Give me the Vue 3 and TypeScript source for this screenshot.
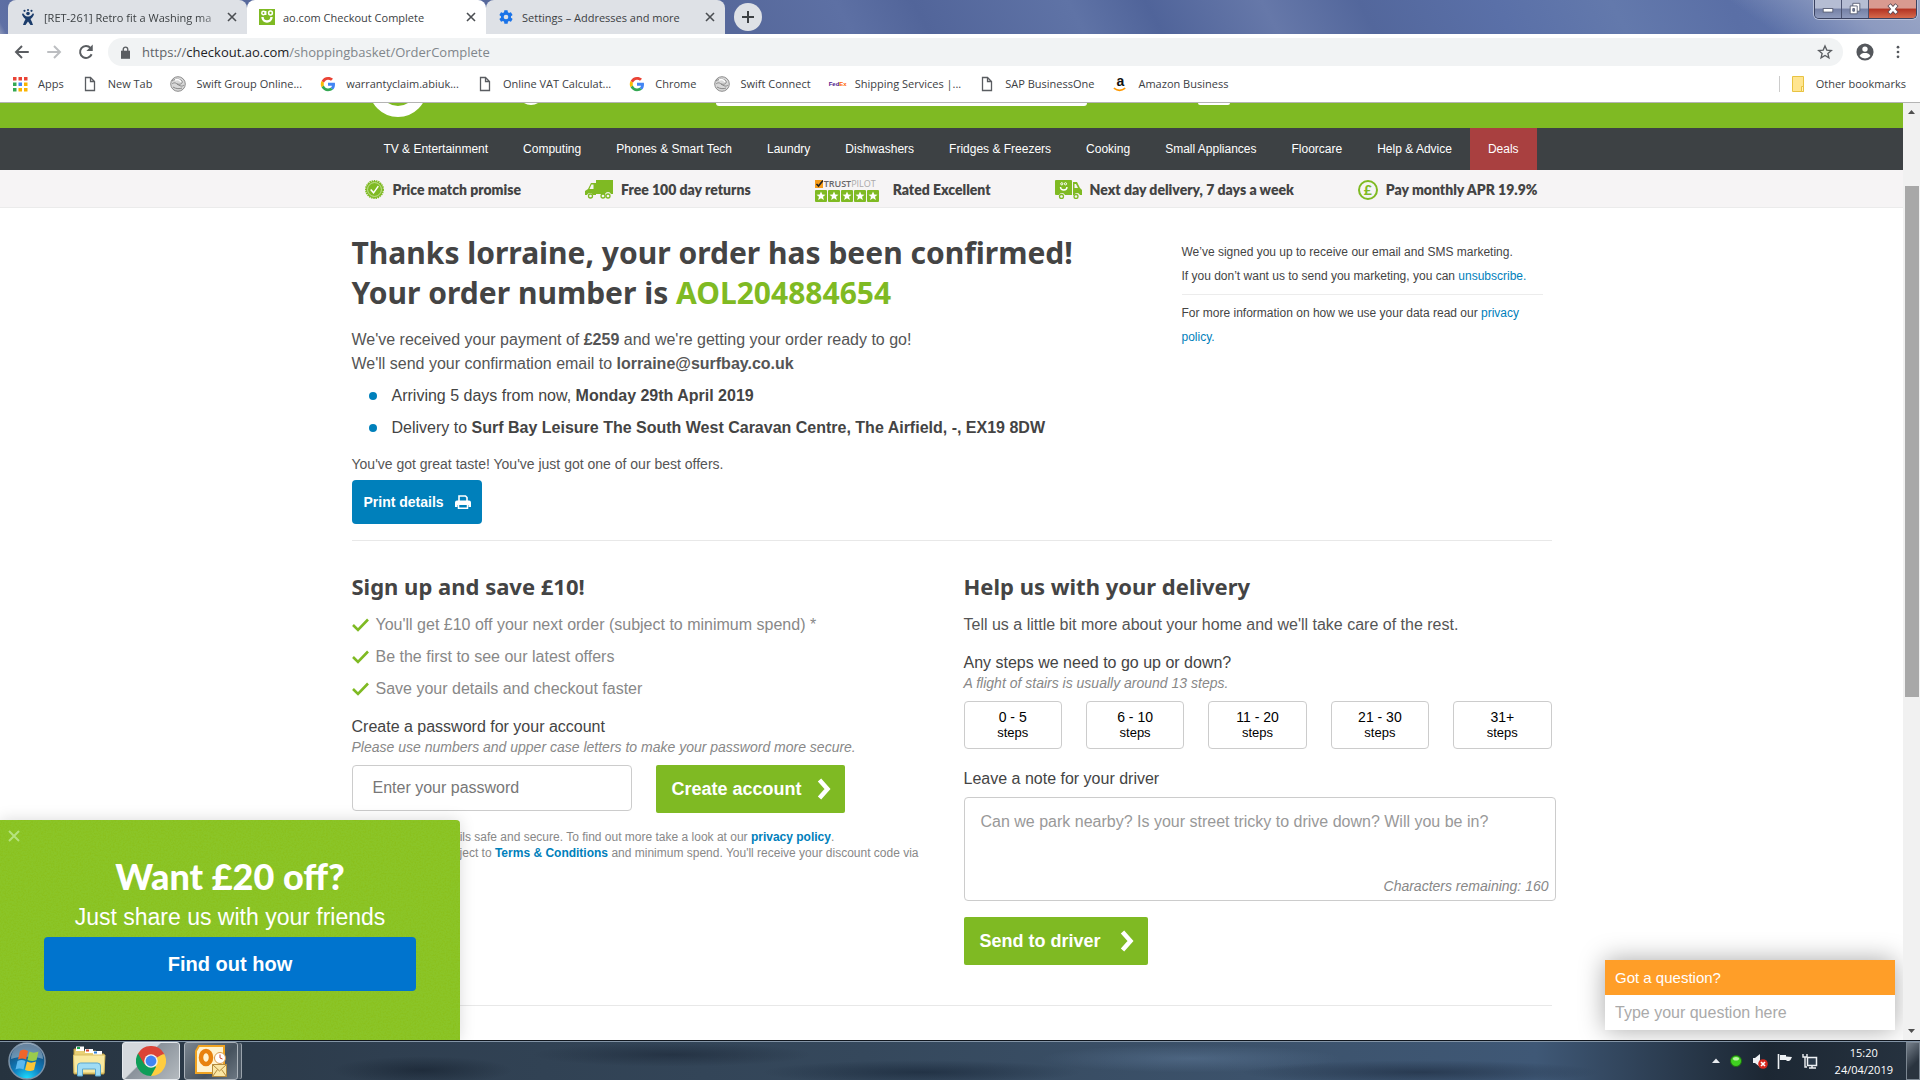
<script setup lang="ts">
import { ref } from 'vue'

interface Tab { title: string; icon: string; active: boolean }
interface Bookmark { title: string; icon: string }

const tabs: Tab[] = [
  { title: '[RET-261] Retro fit a Washing ma', icon: 'jira', active: false },
  { title: 'ao.com Checkout Complete', icon: 'ao', active: true },
  { title: 'Settings – Addresses and more', icon: 'gear', active: false },
]

const bookmarks: Bookmark[] = [
  { title: 'Apps', icon: 'apps' },
  { title: 'New Tab', icon: 'doc' },
  { title: 'Swift Group Online...', icon: 'swift' },
  { title: 'warrantyclaim.abiuk...', icon: 'google' },
  { title: 'Online VAT Calculat...', icon: 'doc' },
  { title: 'Chrome', icon: 'google' },
  { title: 'Swift Connect', icon: 'swift' },
  { title: 'Shipping Services |...', icon: 'fedex' },
  { title: 'SAP BusinessOne', icon: 'doc' },
  { title: 'Amazon Business', icon: 'amazon' },
]

const categories: string[] = [
  'TV & Entertainment', 'Computing', 'Phones & Smart Tech', 'Laundry', 'Dishwashers',
  'Fridges & Freezers', 'Cooking', 'Small Appliances', 'Floorcare', 'Help & Advice', 'Deals',
]

const promos = [
  { icon: 'check', text: 'Price match promise' },
  { icon: 'truck', text: 'Free 100 day returns' },
  { icon: 'trustpilot', text: 'Rated Excellent' },
  { icon: 'van', text: 'Next day delivery, 7 days a week' },
  { icon: 'pound', text: 'Pay monthly APR 19.9%' },
]

const benefits: string[] = [
  "You'll get £10 off your next order (subject to minimum spend) *",
  'Be the first to see our latest offers',
  'Save your details and checkout faster',
]

const stepRanges: string[] = ['0 - 5', '6 - 10', '11 - 20', '21 - 30', '31+']

const address = ref('https://checkout.ao.com/shoppingbasket/OrderComplete')
const password = ref('')
const note = ref('')
const question = ref('')
</script>

<template>
  <div class="desktop">
    <header class="chrome">
      <div class="tabstrip">
        <div v-for="tab in tabs" :key="tab.title" class="tab" :class="{ active: tab.active }">
          <svg v-if="tab.icon === 'jira'" class="ico" viewBox="0 0 16 16" fill="#1b3c6b">
            <circle cx="8" cy="4.500" r="1.800" /><circle cx="4.500" cy="1.800" r="1.100" /><circle cx="8" cy="1" r="1" /><circle cx="11.500" cy="1.800" r="1.100" />
            <path d="M3 4c1.500 3 4 3.500 5 3.500s3.500-.5 5-3.500l1 1.500c-1 2.500-2 3.500-3.500 4.500 1 2 2 4 2.500 6h-2.500L8 12.500 5.500 16H3c.5-2 1.500-4 2.500-6C4 9 3 8 2 5.500z" />
          </svg>
          <svg v-else-if="tab.icon === 'ao'" class="ico" viewBox="0 0 16 16">
            <rect width="16" height="16" fill="#7fba23" />
            <g fill="none" stroke="#fff" stroke-width="1.500"><circle cx="4.500" cy="4" r="1.700" /><path d="M6.700 2v4" /><circle cx="11.500" cy="4" r="1.900" /></g>
            <path d="M3.500 8c0 6 9 6 9 0" fill="none" stroke="#fff" stroke-width="2.400" />
          </svg>
          <svg v-else class="ico" viewBox="0 0 24 24" fill="#1a73e8">
            <path d="M19.400 13c0-.300.100-.700.100-1s0-.700-.100-1l2.100-1.700c.200-.100.300-.400.100-.600l-2-3.500c-.100-.200-.400-.300-.600-.200l-2.500 1c-.500-.400-1.100-.700-1.700-1l-.400-2.600c0-.200-.200-.400-.500-.400h-4c-.200 0-.500.200-.500.400L9.100 5c-.600.300-1.200.600-1.700 1l-2.500-1c-.200-.100-.500 0-.600.200l-2 3.500c-.100.200-.1.500.1.600L4.500 11c0 .300-.1.700-.1 1s0 .700.1 1l-2.100 1.700c-.2.100-.3.400-.1.600l2 3.500c.1.200.4.300.6.200l2.500-1c.5.400 1.100.7 1.700 1l.4 2.600c0 .2.200.4.5.4h4c.2 0 .5-.2.5-.4l.4-2.600c.6-.3 1.200-.6 1.700-1l2.500 1c.2.100.5 0 .6-.2l2-3.500c.1-.2.100-.500-.100-.600zM12 15.500a3.500 3.500 0 1 1 0-7 3.500 3.500 0 0 1 0 7z" />
          </svg>
          <span class="tab-title">{{ tab.title }}</span>
          <button class="tab-close" aria-label="Close tab">
            <svg viewBox="0 0 10 10"><path d="M1 1l8 8M9 1l-8 8" stroke="#4b4e52" stroke-width="1.600" /></svg>
          </button>
        </div>
        <button class="new-tab" aria-label="New tab">
          <svg viewBox="0 0 14 14"><path d="M7 1v12M1 7h12" stroke="#3c4043" stroke-width="2" /></svg>
        </button>
        <div class="win-controls">
          <button aria-label="Minimise"><svg viewBox="0 0 16 16"><rect x="2.500" y="7.500" width="11" height="4" fill="#fff" stroke="#555b70" /></svg></button>
          <button aria-label="Restore"><svg viewBox="0 0 16 16"><path d="M5.500 1.500h8v9h-8z" fill="#fff" stroke="#555b70" /><path d="M2.500 4.500h8v9h-8z" fill="#fff" stroke="#555b70" /><path d="M5.500 7.500h2v3h-2z" fill="#7480a8" stroke="#555b70" /></svg></button>
          <button class="win-close" aria-label="Close"><svg viewBox="0 0 16 16"><path d="M3.500 3l9 10M12.500 3l-9 10" stroke="#5a4a55" stroke-width="5" /><path d="M4 3.500l8 9M12 3.500l-8 9" stroke="#fff" stroke-width="3" /></svg></button>
        </div>
      </div>

      <div class="toolbar">
        <button class="tool" aria-label="Back"><svg viewBox="0 0 24 24"><path d="M21 12H4M12 4l-8 8 8 8" fill="none" stroke="#5a5d61" stroke-width="2.600" /></svg></button>
        <button class="tool" aria-label="Forward"><svg viewBox="0 0 24 24"><path d="M3 12h17M12 4l8 8-8 8" fill="none" stroke="#bcbec1" stroke-width="2.600" /></svg></button>
        <button class="tool" aria-label="Reload"><svg viewBox="0 0 24 24"><path d="M19.500 15a8 8 0 1 1-1.500-8.500" fill="none" stroke="#5a5d61" stroke-width="2.600" /><path d="M21 2v8.500h-8.500z" fill="#5a5d61" /></svg></button>
        <div class="omnibox">
          <svg class="lock" viewBox="0 0 10 14"><path d="M0 5h10v9H0z" fill="#5a5d61" /><path d="M2.500 6V3.500a2.500 2.500 0 0 1 5 0V6" fill="none" stroke="#5a5d61" stroke-width="1.500" /></svg>
          <a class="url" :href="address"><span>https://</span><b>checkout.ao.com</b><span class="path">/shoppingbasket/OrderComplete</span></a>
          <svg class="star" viewBox="0 0 24 24"><path d="M12 3l2.700 6.200 6.800.600-5.200 4.400 1.600 6.600L12 17.300l-5.900 3.500 1.600-6.600-5.200-4.400 6.800-.600z" fill="none" stroke="#5a5d61" stroke-width="2" /></svg>
        </div>
        <button class="tool profile" aria-label="Profile"><svg viewBox="0 0 20 20"><circle cx="10" cy="10" r="9.500" fill="#54575c" /><circle cx="10" cy="6.800" r="3" fill="#fff" /><path d="M4 14.500c1-3 4-3.500 6-3.500s5 .500 6 3.500a8 8 0 0 1-12 0z" fill="#fff" /></svg></button>
        <button class="tool menu" aria-label="Menu"><svg viewBox="0 0 20 20" fill="#54575c"><circle cx="10" cy="4" r="1.700" /><circle cx="10" cy="10" r="1.700" /><circle cx="10" cy="16" r="1.700" /></svg></button>
      </div>

      <nav class="bookmarks" aria-label="Bookmarks">
        <a v-for="mark in bookmarks" :key="mark.title" href="#" class="bookmark">
          <svg v-if="mark.icon === 'apps'" class="ico" viewBox="0 0 16 16">
            <path d="M1 1h3.500v3.500H1zM6.500 1H10v3.500H6.500zM12 1h3.500v3.500H12z" fill="#ea4335" /><path d="M1 6.500h3.500V10H1z" fill="#34a853" /><path d="M6.500 6.500H10V10H6.500z" fill="#4285f4" /><path d="M12 6.500h3.500V10H12zM6.500 12H10v3.500H6.500zM12 12h3.500v3.500H12z" fill="#fbb400" /><path d="M1 12h3.500v3.500H1z" fill="#34a853" />
          </svg>
          <svg v-else-if="mark.icon === 'doc'" class="ico" viewBox="0 0 16 16"><path d="M3.500 1.500h5l4 4v9h-9zM8.500 1.500v4h4" fill="#fff" stroke="#5a5d61" stroke-width="1.300" /></svg>
          <svg v-else-if="mark.icon === 'swift'" class="ico" viewBox="0 0 16 16"><circle cx="8" cy="8" r="7.300" fill="#d8d8d8" stroke="#8d8d8d" /><path d="M2 5c4-3 8-2 10 0 1 2-1 4-5 3 3 2 5 3 7 1M3 11c3 2 7 2 9 1M7 8c-2-2-4-1-5 0" fill="none" stroke="#888" /><path d="M5 4c3-1 5 0 6 2" stroke="#fff" stroke-width="1.500" fill="none" /></svg>
          <svg v-else-if="mark.icon === 'google'" class="ico" viewBox="0 0 48 48">
            <path fill="#EA4335" d="M24 11c3.500 0 6.500 1.200 9 3.500l6-6C35 5 30 3 24 3 15.500 3 8.200 8 4.700 15l7.200 5.500C13.600 15 18.300 11 24 11z" /><path fill="#4285F4" d="M45 24.500c0-1.500-.200-3-.400-4.500H24v9h12c-.500 2.800-2 5-4.400 6.600l7 5.400C43 37 45 31.500 45 24.500z" /><path fill="#FBBC05" d="M11.900 28.500a13 13 0 0 1 0-8L4.700 15a21 21 0 0 0 0 19z" /><path fill="#34A853" d="M24 46c6 0 11-2 14.600-5.200l-7-5.400c-2 1.400-4.500 2.100-7.600 2.100-5.700 0-10.400-3.800-12.100-9L4.700 34C8.200 41 15.500 46 24 46z" />
          </svg>
          <span v-else-if="mark.icon === 'fedex'" class="ico fedex">Fed<i>Ex</i></span>
          <span v-else class="ico amazon">a<svg viewBox="0 0 16 5"><path d="M1 1c4 3 9 3 13 0" fill="none" stroke="#ff9900" stroke-width="1.800" /></svg></span>
          <span>{{ mark.title }}</span>
        </a>
        <a href="#" class="bookmark other">
          <svg class="ico" viewBox="0 0 16 16"><path d="M2.500.500h11v15h-11z" fill="#ffe590" stroke="#e8c342" /><path d="M11.500 10.500h2v5h-2z" fill="#fff0b8" stroke="#e8c342" /></svg>
          <span>Other bookmarks</span>
        </a>
      </nav>
    </header>

    <div class="viewport">
      <div class="page">
        <div class="masthead">
          <div class="masthead-inner">
            <span class="logo-face"></span>
            <span class="logo-dot"></span>
            <span class="search-edge"></span>
            <span class="basket-edge"></span>
          </div>
        </div>

        <nav class="categories" aria-label="Departments">
          <a v-for="name in categories" :key="name" href="#" :class="{ deals: name === 'Deals' }">{{ name }}</a>
        </nav>

        <ul class="promos">
          <li v-for="promo in promos" :key="promo.text">
            <svg v-if="promo.icon === 'check'" width="19" height="19" viewBox="0 0 20 20"><circle cx="10" cy="10" r="9" fill="#7fba23" stroke="#7fba23" stroke-width="2" stroke-dasharray="1.500 .800" /><circle cx="10" cy="10" r="7.300" fill="none" stroke="#d5eab5" stroke-width=".800" /><path d="M6 10l3 3.500L14 6.500" fill="none" stroke="#fff" stroke-width="1.600" /></svg>
            <svg v-else-if="promo.icon === 'truck'" width="28" height="19" viewBox="0 0 28 19"><path d="M11 0h17v14h-2a3.200 3.200 0 0 0-6 0h-9z" fill="#7fba23" /><path d="M10 3H6L3 9l-3 2v4h2a3.200 3.200 0 0 1 6 0h3V3z" fill="#7fba23" /><path d="M8.500 4.500h-2L4.500 9h4z" fill="#f6f4f5" /><circle cx="5.500" cy="16" r="2" fill="none" stroke="#7fba23" stroke-width="1.300" /><circle cx="18" cy="16" r="2" fill="none" stroke="#7fba23" stroke-width="1.300" /><circle cx="23" cy="16" r="2" fill="#f6f4f5" stroke="#7fba23" stroke-width="1.300" /></svg>
            <span v-else-if="promo.icon === 'trustpilot'" class="trustpilot">
              <span class="tp-name"><svg width="8" height="8" viewBox="0 0 8 8"><path d="M0 0h8v8H0z" fill="#f59c1a" /><path d="M1.500 4l2 2L8 .500" fill="none" stroke="#222" stroke-width="1.600" /></svg><span>TRUST<i>PILOT</i></span></span>
              <svg width="64" height="12" viewBox="0 0 64 12"><g v-for="n in 5" :key="n" :transform="`translate(${(n - 1) * 13} 0)`"><rect width="12" height="12" rx="1" fill="#7fba23" /><path d="M6 1.500l1.300 3 3.200.200-2.500 2 .900 3.300L6 8.200l-2.900 1.800.9-3.300-2.500-2 3.200-.200z" fill="#fff" /></g></svg>
            </span>
            <svg v-else-if="promo.icon === 'van'" width="27" height="19" viewBox="0 0 27 19"><path d="M1 0h15a1 1 0 0 1 1 1v14h-7a3.200 3.200 0 0 0-6 0H1a1 1 0 0 1-1-1V1a1 1 0 0 1 1-1z" fill="#7fba23" /><path d="M18 2h4l3 6 2 2v5h-2a3.200 3.200 0 0 0-6 0h-1z" fill="#7fba23" /><path d="M19.500 4h1.500l2 4h-3.500z" fill="#f6f4f5" /><g fill="none" stroke="#fff"><circle cx="6.800" cy="3.800" r="1.100" /><circle cx="10.500" cy="3.800" r="1.100" /><path d="M5.500 7c0 4 6.500 4 6.500 0" stroke-width="1.400" /></g><circle cx="6.500" cy="16.500" r="2" fill="none" stroke="#7fba23" stroke-width="1.300" /><circle cx="21" cy="16.500" r="2" fill="none" stroke="#7fba23" stroke-width="1.300" /></svg>
            <span v-else class="pound">£</span>
            <strong>{{ promo.text }}</strong>
          </li>
        </ul>

        <main class="content">
          <section class="summary">
            <div class="confirmation">
              <h1>Thanks lorraine, your order has been confirmed!<br>Your order number is <em>AOL204884654</em></h1>
              <p class="lead">We've received your payment of <b>£259</b> and we're getting your order ready to go!<br>We'll send your confirmation email to <b>lorraine@surfbay.co.uk</b></p>
              <ul class="facts">
                <li>Arriving 5 days from now, <b>Monday 29th April 2019</b></li>
                <li>Delivery to <b>Surf Bay Leisure The South West Caravan Centre, The Airfield, -, EX19 8DW</b></li>
              </ul>
              <p class="taste">You've got great taste! You've just got one of our best offers.</p>
              <button class="print">Print details
                <svg width="16" height="14" viewBox="0 0 16 14"><path d="M4 6V1h6.500L12 2.500V6" fill="none" stroke="#fff" stroke-width="1.600" /><path d="M2 5.500h12a2 2 0 0 1 2 2V12h-2.500v-2h-11v2H0V7.500a2 2 0 0 1 2-2z" fill="#fff" /><path d="M3.500 10v3.200h9V10" fill="none" stroke="#fff" stroke-width="1.500" /></svg>
              </button>
            </div>
            <aside class="marketing">
              <p>We’ve signed you up to receive our email and SMS marketing.<br>If you don’t want us to send you marketing, you can <a href="#">unsubscribe.</a></p>
              <p>For more information on how we use your data read our <a href="#">privacy policy.</a></p>
            </aside>
          </section>

          <section class="columns">
            <form class="signup" @submit.prevent>
              <h2>Sign up and save £10!</h2>
              <ul class="benefits">
                <li v-for="item in benefits" :key="item">
                  <svg width="17" height="14" viewBox="0 0 17 14"><path d="M1 7l5 5L16 1.500" fill="none" stroke="#7fba23" stroke-width="2.600" /></svg>{{ item }}
                </li>
              </ul>
              <label for="password" class="field-label">Create a password for your account</label>
              <p class="hint">Please use numbers and upper case letters to make your password more secure.</p>
              <div class="password-row">
                <input id="password" v-model="password" type="password" placeholder="Enter your password">
                <button class="go create">Create account
                  <svg width="14" height="22" viewBox="0 0 14 22"><path d="M2.500 2l8 9-8 9" fill="none" stroke="#fff" stroke-width="4.500" /></svg>
                </button>
              </div>
              <p class="small">We'll keep your details safe and secure. To find out more take a look at our <a href="#">privacy policy</a>.<br>*The discount is subject to <a href="#">Terms &amp; Conditions</a> and minimum spend. You'll receive your discount code via email.</p>
            </form>

            <form class="delivery" @submit.prevent>
              <h2>Help us with your delivery</h2>
              <p class="intro">Tell us a little bit more about your home and we'll take care of the rest.</p>
              <p class="field-label">Any steps we need to go up or down?</p>
              <p class="hint">A flight of stairs is usually around 13 steps.</p>
              <div class="steps">
                <button v-for="range in stepRanges" :key="range" type="button"><span>{{ range }}</span><small>steps</small></button>
              </div>
              <label for="note" class="field-label note-label">Leave a note for your driver</label>
              <div class="note">
                <textarea id="note" v-model="note" maxlength="160" placeholder="Can we park nearby? Is your street tricky to drive down? Will you be in?"></textarea>
                <span class="remaining">Characters remaining: {{ 160 - note.length }}</span>
              </div>
              <button class="go send">Send to driver
                <svg width="14" height="22" viewBox="0 0 14 22"><path d="M2.500 2l8 9-8 9" fill="none" stroke="#fff" stroke-width="4.500" /></svg>
              </button>
            </form>
          </section>
        </main>

        <aside class="referral">
          <svg class="grain" aria-hidden="true"><filter id="grain" x="0" y="0" width="100%" height="100%"><feTurbulence type="fractalNoise" baseFrequency="0.6" numOctaves="2" /><feColorMatrix values="0 0 0 0 0.25  0 0 0 0 0.45  0 0 0 0 0  0 1.6 0 0 -0.6" /></filter><rect width="100%" height="100%" filter="url(#grain)" /></svg>
          <button class="dismiss" aria-label="Dismiss"><svg width="12" height="12" viewBox="0 0 12 12"><path d="M1 1l10 10M11 1L1 11" stroke="#b5e27e" stroke-width="2" /></svg></button>
          <h3>Want £20 off?</h3>
          <p>Just share us with your friends</p>
          <button class="find-out">Find out how</button>
        </aside>

        <aside class="chat">
          <label for="question">Got a question?</label>
          <input id="question" v-model="question" type="text" placeholder="Type your question here">
        </aside>
      </div>

      <div class="scrollbar" aria-hidden="true">
        <svg width="17" height="17" viewBox="0 0 17 17"><path d="M5 11l3.500-4L12 11z" fill="#505050" /></svg>
        <div class="track"><div class="thumb"></div></div>
        <svg width="17" height="17" viewBox="0 0 17 17"><path d="M5 6l3.500 4L12 6z" fill="#505050" /></svg>
      </div>
    </div>

    <footer class="taskbar">
      <button class="start" aria-label="Start">
        <svg width="38" height="38" viewBox="0 0 38 38">
          <defs><radialGradient id="orb" cx=".5" cy="1" r=".9"><stop offset="0" stop-color="#1fe0ff" /><stop offset=".45" stop-color="#0f7fc0" /><stop offset="1" stop-color="#17446e" /></radialGradient></defs>
          <circle cx="19" cy="19" r="18" fill="url(#orb)" stroke="#7d93a8" stroke-width="1.500" />
          <path d="M3 17a16 16 0 0 1 32 0c-8-3-24-3-32 0z" fill="#fff" opacity=".35" />
          <path d="M12 9c3-2 5-1.500 8 0l-2 8.500c-3-1.500-5-1.500-8 0z" fill="#f0652b" /><path d="M21.500 9.500c3 1.500 5 1.500 9 0l-2 8.500c-4 1.500-6 1-9 0z" fill="#9bcb4b" /><path d="M9.500 19c3-1.500 5-1.500 8 0l-2 8.500c-3-1.500-5-1.500-8 0z" fill="#5cb8ee" /><path d="M19 19.500c3 1.500 5 1.500 9 0L26 28c-4 1.500-6 1-9 0z" fill="#fcc536" />
        </svg>
      </button>
      <button class="task explorer" aria-label="Windows Explorer">
        <svg width="34" height="32" viewBox="0 0 34 32"><path d="M2 4h8l2 2h12l2 3h6v20H2z" fill="#e9cf74" stroke="#b9983c" /><path d="M4 1.500h8V6H4z" fill="#fff" /><path d="M5 2h3v2H5z" fill="#19a84c" /><path d="M13 4h8v4h-8z" fill="#fff" /><path d="M14 4.500h3v2h-3z" fill="#d8432c" /><path d="M21 6h9v4h-9z" fill="#fff" /><path d="M22 6.500h3v2h-3z" fill="#2b7fd8" /><path d="M1.500 10H33l-1 18H2z" fill="#f9e9a0" stroke="#d9bd62" /><path d="M5.500 31V21q0-3 3-3h17q3 0 3 3v10h-5v-7h-13v7z" fill="#9fdcf5" stroke="#5aa6cf" /></svg>
      </button>
      <button class="task current" aria-label="Google Chrome">
        <svg width="30" height="30" viewBox="0 0 30 30"><path d="M15 15L2 7.500A15 15 0 0 1 28 7.500z" fill="#db4437" /><path d="M15 15l13-7.500A15 15 0 0 1 15 30z" fill="#ffcd40" /><path d="M15 15v0L2 7.500A15 15 0 0 0 15 30l5-9z" fill="#0f9d58" /><path d="M15 8.200h13.400L28 7.500 15 4 2 7.500l6.500 11z" fill="#db4437" /><circle cx="15" cy="15" r="6.800" fill="#f1f1f1" /><circle cx="15" cy="15" r="5.400" fill="#4285f4" /></svg>
      </button>
      <button class="task open" aria-label="Outlook">
        <svg width="32" height="32" viewBox="0 0 32 32"><path d="M4 1h25v27H1V6z" fill="#fff3cf" stroke="#f0a321" stroke-width="2" /><ellipse cx="11" cy="12.500" rx="5" ry="6.500" fill="none" stroke="#e8820e" stroke-width="4.500" /><circle cx="25" cy="13" r="5.500" fill="#fff" stroke="#d99a4a" /><path d="M25 9.500V13l2.500 1" fill="none" stroke="#d0432c" /><path d="M17.500 19.500h14v12h-14z" fill="#fbe7a4" stroke="#b58b3c" /><path d="M17.500 19.500l7 6.500 7-6.500M17.500 31.500l5-7M31.500 31.500l-5-7" fill="none" stroke="#b58b3c" /></svg>
      </button>
      <div class="tray">
        <svg width="8" height="6" viewBox="0 0 8 6"><path d="M0 5l4-4.500L8 5z" fill="#e8ecf0" /></svg>
        <svg width="14" height="14" viewBox="0 0 14 14"><circle cx="7" cy="7" r="5.500" fill="#3fd020" stroke="#1d6b12" /><ellipse cx="7" cy="4.800" rx="3" ry="1.800" fill="#b8f5a0" /></svg>
        <svg width="16" height="16" viewBox="0 0 16 16"><path d="M1 5h2l5-4v13l-5-4H1z" fill="#eef1f4" /><circle cx="11" cy="11" r="4.800" fill="#d8281e" /><path d="M9 9l4 4M13 9l-4 4" stroke="#fff" stroke-width="1.600" /></svg>
        <svg width="16" height="16" viewBox="0 0 16 16"><path d="M1.500 1v15" stroke="#eef1f4" stroke-width="1.600" /><path d="M3 2h6v1.500l6 .500-1.500 3L12 8H9.500V7H3z" fill="#eef1f4" /></svg>
        <svg width="16" height="16" viewBox="0 0 16 16"><path d="M5.500 4.500h9v8h-9zM7 15h7M10 13v2" fill="#2b3a4a" stroke="#eef1f4" stroke-width="1.500" /><path d="M1 1v3h4V1M3 4v10h2" fill="none" stroke="#eef1f4" stroke-width="1.400" /></svg>
        <div class="clock"><span>15:20</span><span>24/04/2019</span></div>
        <button class="show-desktop" aria-label="Show desktop"></button>
      </div>
    </footer>
  </div>
</template>

<style>
body { overflow: hidden; }
</style>

<style scoped>
* { box-sizing: border-box; }
.desktop {
  display: flex;
  flex-direction: column;
  height: 100vh;
  overflow: hidden;
  font-family: "Liberation Sans", Arial, sans-serif;
  color: #444;
}
h1, h2, h3, p, ul { margin: 0; padding: 0; }
ul { list-style: none; }
button { border: 0; padding: 0; background: none; font-family: inherit; }
a { color: #0080bb; text-decoration: none; }
svg { display: block; flex: none; }

/* Browser window */
.chrome { flex: none; font-family: "Open Sans", "Noto Sans", sans-serif; font-size: 11px; color: #3c4043; border-bottom: 1px solid #b4b4b4; }
.tabstrip {
  display: flex;
  height: 34px;
  padding-left: 8px;
  background:
    linear-gradient(62deg, #8c97b9 0, #5f70a5 6px, transparent 60px),
    linear-gradient(215deg, #9ba7c6 0, #8c9ac0 50px, transparent 110px),
    linear-gradient(62deg, #56689b 38%, #5d70a4 44%, #52659a 48%, #5f73a6 56%, #50649a 60%, #6678a9 66%, #53679c 71%, #5a70a8 78%, #6379ac 84%, #5a6fa6 90%, #6078b0 100%);
}
.tab { display: flex; align-items: center; width: 239px; height: 34px; padding: 0 10px 0 12px; background: #dee1e6; border-radius: 8px 8px 0 0; }
.tab.active { background: #fff; }
.ico { width: 16px; height: 16px; flex: none; }
.tab-title { flex: 1; margin-left: 8px; overflow: hidden; white-space: nowrap; }
.tab:first-child .tab-title { mask-image: linear-gradient(90deg, #000 88%, rgba(0, 0, 0, .3)); }
.tab-close { margin-left: 8px; }
.tab-close svg { width: 10px; height: 10px; }
.new-tab { display: grid; place-items: center; width: 28px; height: 28px; margin: 3px 0 0 9px; border-radius: 50%; background: #dee1e6; }
.new-tab svg { width: 14px; height: 14px; }
.win-controls { display: flex; height: 19px; margin: 0 3px 0 auto; border: 1px solid #3a4260; border-top: 0; border-radius: 0 0 5px 5px; overflow: hidden; box-shadow: 0 0 0 1px #b9c2da; }
.win-controls button { display: grid; place-items: center; width: 27px; background: linear-gradient(#b5bdd3 45%, #7480a5 50%, #8f9bbd); border-right: 1px solid #4a5270; }
.win-controls .win-close { width: 47px; border: 0; background: linear-gradient(#d99a90 45%, #b33322 50%, #d66a4c); }
.win-controls svg { width: 14px; height: 14px; }
.toolbar { display: flex; align-items: center; height: 36px; padding: 0 12px; background: #fff; }
.tool { display: grid; place-items: center; width: 20px; height: 20px; margin-right: 12px; }
.tool svg { width: 18px; height: 18px; }
.omnibox { flex: 1; display: flex; align-items: center; height: 28px; padding: 0 10px 0 13px; border-radius: 14px; background: #f1f3f4; }
.lock { width: 9px; height: 13px; }
.url { flex: 1; margin-left: 12px; font-size: 13px; color: #5f6368; }
.url b { font-weight: 400; color: #202124; }
.url .path { color: #80868b; }
.star { width: 16px; height: 16px; }
.tool.profile { margin: 0 0 0 12px; }
.tool.menu { margin: 0 0 0 13px; }
.tool.menu svg { width: 16px; height: 16px; }
.bookmarks { display: flex; align-items: center; gap: 18px; height: 32px; padding: 0 14px 4px 12px; background: #fff; }
.bookmark { display: flex; align-items: center; gap: 10px; color: #3c4043; white-space: nowrap; line-height: 16px; }
.fedex { font: 700 6px/16px "Liberation Sans", Arial, sans-serif; color: #4d148c; }
.fedex i { font-style: normal; color: #ff6600; }
.amazon { display: flex; flex-direction: column; align-items: center; font: 700 14px/11px "Liberation Sans", Arial, sans-serif; color: #111; }
.amazon svg { width: 14px; height: 5px; }
.other { margin-left: auto; padding-left: 10px; border-left: 1px solid #ccc; }

/* Page */
.viewport { flex: 1; min-height: 0; display: flex; background: #fff; }
.page { position: relative; flex: 1; min-width: 0; overflow: hidden; }
.masthead { height: 25px; background: #7fba23; overflow: hidden; }
.masthead-inner { position: relative; max-width: 1200px; height: 25px; margin: 0 auto; }
.masthead-inner span { position: absolute; }
.logo-face { left: 17px; bottom: 11px; width: 58px; height: 58px; border: 11px solid #fff; border-radius: 50%; }
.logo-dot { left: 166px; bottom: 23px; width: 26px; height: 26px; border-radius: 50%; background: #fff; }
.search-edge { left: 364px; top: 0; width: 371px; height: 3px; border-radius: 0 0 3px 3px; background: #fff; }
.basket-edge { left: 846px; top: 0; width: 32px; height: 2px; border-radius: 0 0 2px 2px; background: #fff; }
.categories { display: flex; justify-content: center; gap: 1px; height: 42px; background: #3d4144; }
.categories a { padding: 0 17px; font-size: 12px; line-height: 42px; color: #fff; white-space: nowrap; }
.categories .deals { padding: 0 18px; background: #a94040; }
.promos { display: flex; justify-content: center; gap: 64px; height: 38px; padding-top: 2px; background: #f6f4f5; border-bottom: 1px solid #ebebeb; }
.promos li { display: flex; align-items: center; gap: 8px; font-family: Lato, "Open Sans", sans-serif; font-size: 14px; color: #444; white-space: nowrap; }
.promos strong { font-weight: 800; }
.trustpilot { width: 65px; margin-right: 5px; }
.tp-name { display: flex; align-items: center; gap: 1px; height: 12px; font: 600 9px/12px "Open Sans", sans-serif; color: #666; }
.tp-name i { font-style: normal; font-weight: 400; color: #aaa; }
.pound { width: 20px; height: 20px; border: 2px solid #7fba23; border-radius: 50%; color: #7fba23; font-size: 14px; font-weight: 900; line-height: 16px; text-align: center; }
.content { max-width: 1200px; margin: 0 auto; }
.summary { display: flex; justify-content: space-between; padding: 25px 0 16px; border-bottom: 1px solid #e8e8e8; }
h1 { font: 700 30px/40px "Noto Sans", "Open Sans", sans-serif; white-space: nowrap; }
h1 em { font-style: normal; color: #7fba23; }
.lead { margin-top: 15px; font-size: 16px; line-height: 24px; color: #555; }
.facts { margin-top: 4px; }
.facts li { display: flex; align-items: center; padding-left: 17px; font-size: 16px; line-height: 32px; white-space: pre; }
.facts li::before { content: ""; width: 8px; height: 8px; margin-right: 15px; border-radius: 50%; background: #0080bb; }
.taste { margin-top: 8px; font-size: 14px; line-height: 24px; color: #555; }
.print { display: flex; align-items: center; justify-content: space-between; width: 130px; height: 44px; margin-top: 4px; padding: 0 11px 0 12px; border-radius: 4px; background: #0080bb; color: #fff; font-size: 14px; font-weight: 700; }
.marketing { width: 361px; margin: 7px 9px 0 0; font-size: 12px; line-height: 24px; }
.marketing p + p { margin-top: 6px; padding-top: 6px; border-top: 1px solid #ececec; }
.columns { display: grid; grid-template-columns: 588px 588px; justify-content: space-between; height: 465px; padding-top: 29px; border-bottom: 1px solid #e8e8e8; }
h2 { font: 700 22px/32px "Noto Sans", "Open Sans", sans-serif; }
.benefits { margin-top: 7px; }
.benefits li { display: flex; align-items: center; gap: 7px; font-size: 16px; line-height: 32px; color: #888; }
.field-label { display: block; margin-top: 12px; font-size: 16px; line-height: 20px; color: #444; }
.hint { font-size: 14px; font-style: italic; line-height: 20px; color: #888; }
.password-row { display: flex; gap: 24px; margin-top: 8px; }
.password-row input { width: 280px; height: 46px; padding: 0 20px; border: 1px solid #ccc; border-radius: 4px; font: 16px "Liberation Sans", Arial, sans-serif; }
.password-row input::placeholder { color: #777; }
.go { display: flex; align-items: center; justify-content: space-between; height: 48px; padding: 0 14px 0 16px; border-radius: 2px; background: #7fba23; color: #fff; font-size: 18px; font-weight: 700; }
.create { width: 189px; }
.send { width: 184px; }
.small { margin-top: 16px; font-size: 12px; line-height: 16px; color: #888; }
.small a { font-weight: 700; }
.intro { margin-top: 11px; font-size: 16px; line-height: 24px; color: #555; }
.intro + .field-label { margin-top: 16px; }
.steps { display: grid; grid-template-columns: repeat(5, 1fr); gap: 24px; margin-top: 8px; }
.steps button { height: 48px; border: 1px solid #ccc; border-radius: 4px; color: #000; line-height: 16px; }
.steps span, .steps small { display: block; }
.steps span { font-size: 14px; }
.steps small { font-size: 13px; }
.note-label { margin-top: 20px; }
.note { position: relative; width: 592px; margin: 8px 0 16px; }
.note textarea { display: block; width: 100%; height: 104px; padding: 14px 16px; border: 1px solid #ccc; border-radius: 4px; resize: none; font: 16px/20px "Liberation Sans", Arial, sans-serif; }
.note textarea::placeholder { color: #999; }
.remaining { position: absolute; right: 7px; bottom: 7px; font-size: 14px; font-style: italic; line-height: 16px; color: #888; }

/* Floating panels */
.referral { position: absolute; left: 0; bottom: 0; width: 460px; height: 220px; padding: 34px 44px 0; border-radius: 0 4px 0 0; background: #8bc528; color: #fff; text-align: center; box-shadow: 0 0 16px rgba(0, 0, 0, .15); }
.grain { position: absolute; inset: 0; width: 100%; height: 100%; opacity: .4; }
.dismiss { position: absolute; left: 8px; top: 10px; }
.referral h3 { position: relative; font: 900 36px/44px Lato, "Open Sans", sans-serif; }
.referral p { position: relative; font-size: 23px; line-height: 39px; }
.find-out { position: relative; width: 100%; height: 54px; border-radius: 4px; background: #0074ce; color: #fff; font-size: 20px; font-weight: 700; }
.chat { position: absolute; right: 8px; bottom: 10px; width: 290px; box-shadow: 0 0 26px rgba(0, 0, 0, .35); }
.chat label { display: block; height: 35px; padding: 0 10px; background: #ff9e28; color: #fff; font-size: 15px; line-height: 35px; }
.chat input { display: block; width: 100%; height: 35px; padding: 0 10px; border: 0; background: #fff; font: 16px "Liberation Sans", Arial, sans-serif; }
.chat input::placeholder { color: #aaa; }
.scrollbar { flex: none; display: flex; flex-direction: column; width: 17px; background: #f1f1f1; }
.track { flex: 1; padding: 66px 1px 0 2px; }
.thumb { height: 61%; background: #a8a8a8; }

/* Taskbar */
.taskbar {
  flex: none;
  display: flex;
  align-items: center;
  height: 40px;
  padding-left: 8px;
  border-top: 1px solid #10161e;
  box-shadow: inset 0 1px 0 #8394a6;
  background:
    radial-gradient(ellipse 90px 14px at 22% 75%, rgba(15, 25, 38, .5), transparent),
    radial-gradient(ellipse 140px 12px at 35% 35%, rgba(20, 30, 45, .45), transparent),
    radial-gradient(ellipse 160px 12px at 48% 80%, rgba(15, 28, 45, .5), transparent),
    radial-gradient(ellipse 150px 14px at 62% 45%, rgba(110, 140, 175, .35), transparent),
    radial-gradient(ellipse 180px 12px at 74% 80%, rgba(20, 32, 50, .5), transparent),
    linear-gradient(90deg, #26333f, #2f3f50 20%, #35485c 45%, #3c526b 65%, #3f5876 80%, #1c2733 92%, #273340);
}
.start { width: 38px; height: 38px; }
.task { display: grid; place-items: center; width: 54px; height: 38px; border-radius: 3px; }
.explorer { margin: 0 6px 0 16px; }
.current { width: 58px; border: 1px solid #e5e9ed; background: linear-gradient(135deg, #d5d9dd 40%, #8a929b 42%, #b4babf); }
.open { margin-left: 4px; border: 1px solid #aab2ba; background: linear-gradient(135deg, #7b858f, #46525e 60%, #6c7782); box-shadow: 4px 0 0 -1px #4e5a66, 5px 0 0 -1px #9aa3ac; }
.tray { display: flex; align-items: center; gap: 9px; height: 100%; margin-left: auto; }
.clock { display: flex; flex-direction: column; align-items: center; margin: 0 4px 0 8px; color: #fff; font: 11px/17px "Open Sans", "Noto Sans", sans-serif; }
.show-desktop { width: 14px; height: 38px; border: 1px solid #7c8792; background: linear-gradient(135deg, #77818c, #2a343f 60%); }
</style>
